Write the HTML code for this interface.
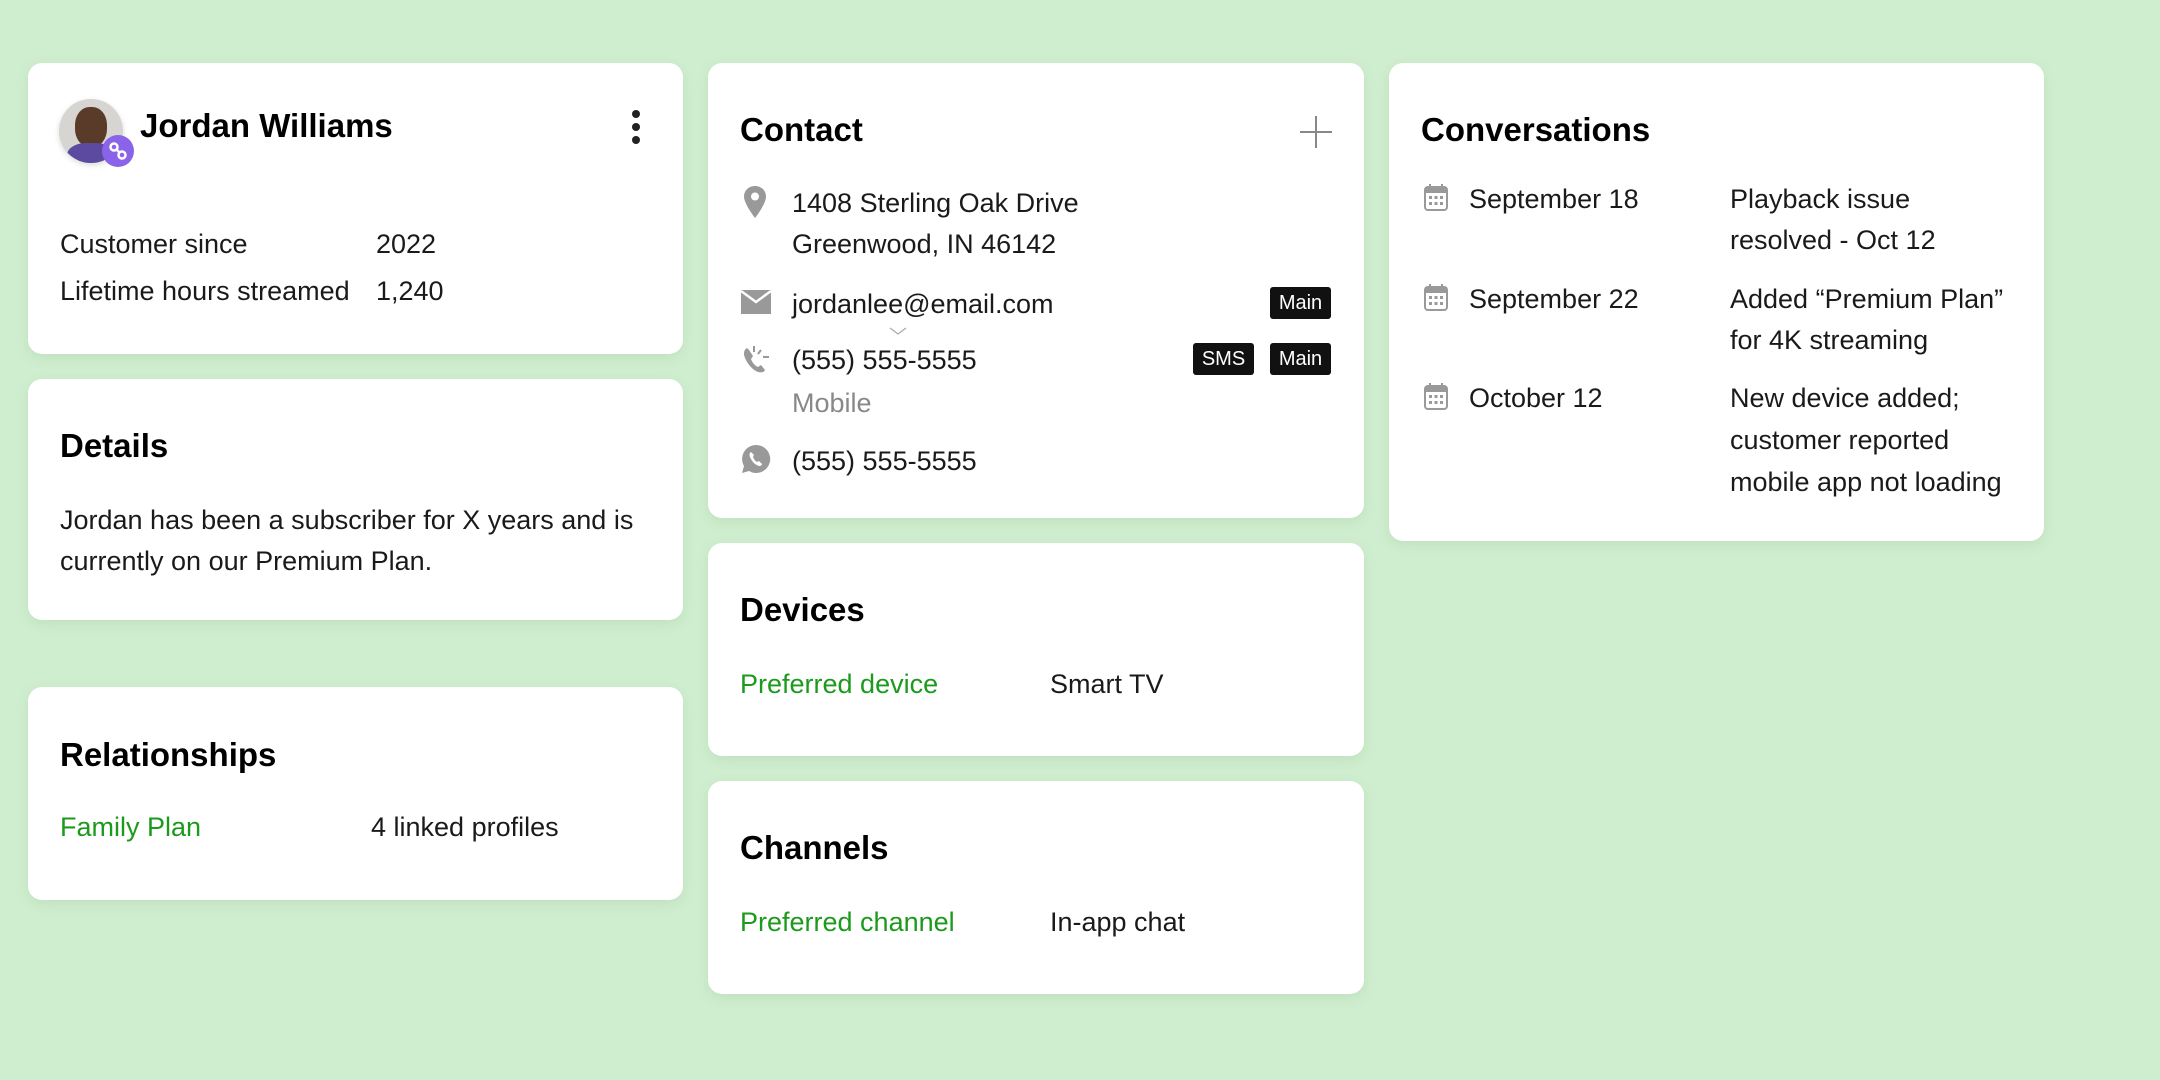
<!DOCTYPE html>
<html><head><meta charset="utf-8"><style>
*{margin:0;padding:0;box-sizing:border-box}
body{width:2160px;height:1080px;background:#cfeecf;font-family:"Liberation Sans",sans-serif;color:#111;position:relative;overflow:hidden}
.card{position:absolute;background:#fff;border-radius:14px;box-shadow:0 4px 14px rgba(0,80,0,0.08)}
.t{position:absolute;font-size:27px;line-height:41px;white-space:nowrap;color:#1a1a1a;margin-top:2px}
.h{position:absolute;font-size:33px;font-weight:bold;line-height:40px;white-space:nowrap;color:#000;margin-top:1px}
.g{color:#1c9a1c}
.b{position:absolute;background:#111;color:#fff;font-size:20px;line-height:32px;height:32px;text-align:center;border-radius:3px}
svg{position:absolute}
</style></head><body>
<!-- column 1 -->
<div class="card" style="left:28px;top:63px;width:655px;height:291px"></div>
<div style="position:absolute;left:59px;top:99px;width:64px;height:64px;border-radius:50%;background:#d6d5d2;overflow:hidden;box-shadow:0 2px 6px rgba(0,0,0,.15)">
 <div style="position:absolute;left:16px;top:8px;width:32px;height:40px;border-radius:45%;background:#5a3a28"></div>
 <div style="position:absolute;left:8px;top:44px;width:48px;height:30px;border-radius:40% 40% 0 0;background:#5b4aa0"></div>
</div>
<div style="position:absolute;left:102px;top:135px;width:32px;height:32px;border-radius:50%;background:#8b63e8"></div>
<svg style="left:108px;top:141px" width="20" height="20" viewBox="0 0 20 20"><circle cx="6" cy="6" r="3.5" fill="none" stroke="#fff" stroke-width="2.5"/><circle cx="14" cy="14" r="3.5" fill="none" stroke="#fff" stroke-width="2.5"/><path d="M8 8l4 4" stroke="#fff" stroke-width="2.5"/></svg>
<div class="h" style="left:140px;top:105px;font-size:33px">Jordan Williams</div>
<svg style="left:627px;top:109px" width="18" height="36"><circle cx="9" cy="5" r="4" fill="#222"/><circle cx="9" cy="18" r="4" fill="#222"/><circle cx="9" cy="31" r="4" fill="#222"/></svg>
<div class="t" style="left:60px;top:222px">Customer since</div>
<div class="t" style="left:376px;top:222px">2022</div>
<div class="t" style="left:60px;top:269px">Lifetime hours streamed</div>
<div class="t" style="left:376px;top:269px">1,240</div>

<div class="card" style="left:28px;top:379px;width:655px;height:241px"></div>
<div class="h" style="left:60px;top:425px">Details</div>
<div class="t" style="left:60px;top:498px">Jordan has been a subscriber for X years and is</div>
<div class="t" style="left:60px;top:539px">currently on our Premium Plan.</div>

<div class="card" style="left:28px;top:687px;width:655px;height:213px"></div>
<div class="h" style="left:60px;top:734px">Relationships</div>
<div class="t g" style="left:60px;top:805px">Family Plan</div>
<div class="t" style="left:371px;top:805px">4 linked profiles</div>

<!-- column 2 -->
<div class="card" style="left:708px;top:63px;width:656px;height:455px"></div>
<div class="h" style="left:740px;top:109px">Contact</div>
<svg style="left:1298px;top:114px" width="36" height="36"><path d="M18 2v32M2 18h32" stroke="#888" stroke-width="2"/></svg>
<svg style="left:743px;top:185px" width="24" height="34" viewBox="0 0 24 34"><path d="M12 1C5.5 1 1 5.8 1 11.5 1 19 12 33 12 33s11-14 11-21.5C23 5.8 18.5 1 12 1z" fill="#999"/><circle cx="12" cy="11.5" r="4" fill="#fff"/></svg>
<div class="t" style="left:792px;top:181px">1408 Sterling Oak Drive</div>
<div class="t" style="left:792px;top:222px">Greenwood, IN 46142</div>
<svg style="left:741px;top:290px" width="30" height="24" viewBox="0 0 30 24"><rect x="0" y="0" width="30" height="24" fill="#999"/><path d="M0 1l15 11L30 1" fill="none" stroke="#fff" stroke-width="2.5"/></svg>
<div class="t" style="left:792px;top:282px">jordanlee@email.com</div>
<div class="b" style="left:1270px;top:287px;width:61px">Main</div>
<svg style="left:888px;top:326px" width="20" height="10"><path d="M2 2l8 6 8-6" fill="none" stroke="#aaa" stroke-width="1.2"/></svg>
<svg style="left:741px;top:344px" width="32" height="32" viewBox="0 0 32 32"><path d="M6 4c-3 2-4 5-2 10 3 7 8 12 13 14 4 1 6 0 7-2l-4-5-3 2c-3-1-6-5-7-8l2-3-4-6z" fill="#999"/><path d="M13 2v6M20 6l-3 4M22 13h6" stroke="#999" stroke-width="2"/></svg>
<div class="t" style="left:792px;top:338px">(555) 555-5555</div>
<div class="b" style="left:1193px;top:343px;width:61px">SMS</div>
<div class="b" style="left:1270px;top:343px;width:61px">Main</div>
<div class="t" style="left:792px;top:381px;color:#888">Mobile</div>
<svg style="left:741px;top:444px" width="30" height="30" viewBox="0 0 30 30"><path d="M15 1a14 14 0 0 0-12 21L1 29l7-2A14 14 0 1 0 15 1z" fill="#999"/><path d="M10 8c-2 1-2 4 0 7 2 4 5 6 8 7 2 0 3-1 3-2l-3-3-2 1c-2-1-3-3-4-5l1-2-3-3z" fill="#fff"/></svg>
<div class="t" style="left:792px;top:439px">(555) 555-5555</div>

<div class="card" style="left:708px;top:543px;width:656px;height:213px"></div>
<div class="h" style="left:740px;top:589px">Devices</div>
<div class="t g" style="left:740px;top:662px">Preferred device</div>
<div class="t" style="left:1050px;top:662px">Smart TV</div>

<div class="card" style="left:708px;top:781px;width:656px;height:213px"></div>
<div class="h" style="left:740px;top:827px">Channels</div>
<div class="t g" style="left:740px;top:900px">Preferred channel</div>
<div class="t" style="left:1050px;top:900px">In-app chat</div>

<!-- column 3 -->
<div class="card" style="left:1389px;top:63px;width:655px;height:478px"></div>
<div class="h" style="left:1421px;top:109px">Conversations</div>
<svg style="left:1424px;top:183px" width="24" height="28" viewBox="0 0 24 28"><rect x="1" y="4" width="22" height="23" rx="3" fill="none" stroke="#999" stroke-width="2"/><rect x="1" y="4" width="22" height="6" fill="#999"/><path d="M6 1v5M18 1v5" stroke="#999" stroke-width="2"/><g fill="#999"><rect x="5" y="13" width="3" height="3"/><rect x="10.5" y="13" width="3" height="3"/><rect x="16" y="13" width="3" height="3"/><rect x="5" y="19" width="3" height="3"/><rect x="10.5" y="19" width="3" height="3"/><rect x="16" y="19" width="3" height="3"/></g></svg>
<svg style="left:1424px;top:283px" width="24" height="28" viewBox="0 0 24 28"><rect x="1" y="4" width="22" height="23" rx="3" fill="none" stroke="#999" stroke-width="2"/><rect x="1" y="4" width="22" height="6" fill="#999"/><path d="M6 1v5M18 1v5" stroke="#999" stroke-width="2"/><g fill="#999"><rect x="5" y="13" width="3" height="3"/><rect x="10.5" y="13" width="3" height="3"/><rect x="16" y="13" width="3" height="3"/><rect x="5" y="19" width="3" height="3"/><rect x="10.5" y="19" width="3" height="3"/><rect x="16" y="19" width="3" height="3"/></g></svg>
<svg style="left:1424px;top:382px" width="24" height="28" viewBox="0 0 24 28"><rect x="1" y="4" width="22" height="23" rx="3" fill="none" stroke="#999" stroke-width="2"/><rect x="1" y="4" width="22" height="6" fill="#999"/><path d="M6 1v5M18 1v5" stroke="#999" stroke-width="2"/><g fill="#999"><rect x="5" y="13" width="3" height="3"/><rect x="10.5" y="13" width="3" height="3"/><rect x="16" y="13" width="3" height="3"/><rect x="5" y="19" width="3" height="3"/><rect x="10.5" y="19" width="3" height="3"/><rect x="16" y="19" width="3" height="3"/></g></svg>
<div class="t" style="left:1469px;top:177px">September 18</div>
<div class="t" style="left:1730px;top:177px">Playback issue</div>
<div class="t" style="left:1730px;top:218px">resolved - Oct 12</div>
<div class="t" style="left:1469px;top:277px">September 22</div>
<div class="t" style="left:1730px;top:277px">Added “Premium Plan”</div>
<div class="t" style="left:1730px;top:318px">for 4K streaming</div>
<div class="t" style="left:1469px;top:376px">October 12</div>
<div class="t" style="left:1730px;top:376px">New device added;</div>
<div class="t" style="left:1730px;top:418px">customer reported</div>
<div class="t" style="left:1730px;top:460px">mobile app not loading</div>
</body></html>
